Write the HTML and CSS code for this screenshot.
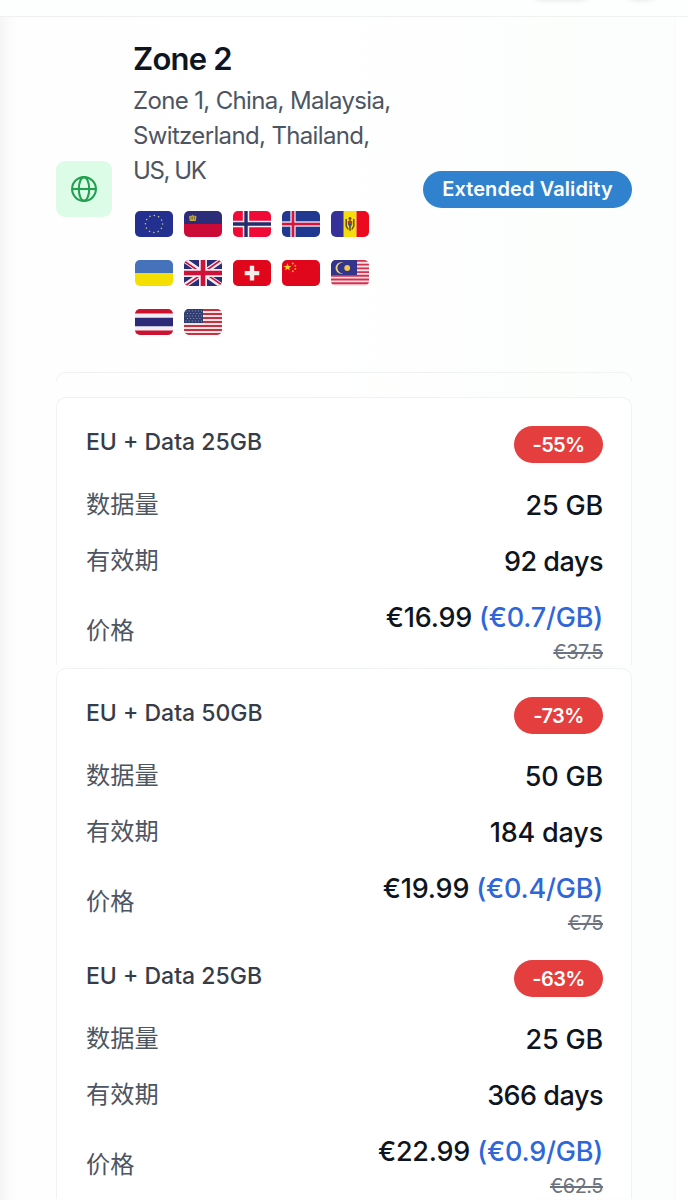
FILE: index.html
```html
<!DOCTYPE html>
<html lang="zh-CN">
<head>
  <meta charset="UTF-8">
  <meta name="viewport" content="width=device-width, initial-scale=1.0">
  <title>Zone 2</title>
  <link rel="stylesheet" href="styles.css">
</head>
<body>
  <header class="topbar">
    <span class="topbar-pill"></span>
    <span class="topbar-dot"></span>
  </header>

  <main class="panel">
    <section class="zone">
      <div class="zone-icon">
        <svg viewBox="0 0 26 26" width="26" height="26" fill="none" stroke="#22a050" stroke-width="2.1">
          <circle cx="13" cy="13" r="11.9"/>
          <ellipse cx="13" cy="13" rx="5.2" ry="11.9"/>
          <path d="M1 13h24"/>
        </svg>
      </div>
      <div class="zone-info">
        <h1 class="zone-title">Zone 2</h1>
        <p class="zone-desc">Zone 1, China, Malaysia,<br>Switzerland, Thailand,<br><span class="tight">US, UK</span></p>
        <div class="flags">
          <!-- EU -->
          <svg class="flag" viewBox="0 0 38 26">
            <path fill="#233090" d="M0 0h38v26H0z"/>
            <circle cx="19" cy="13" r="8.6" fill="none" stroke="#c9c77c" stroke-width="1.5" stroke-linecap="round" stroke-dasharray=".1 4.403"/>
          </svg>
          <!-- Liechtenstein -->
          <svg class="flag" viewBox="0 0 38 26">
            <path fill="#2b2d78" d="M0 0h38v13H0z"/>
            <path fill="#cc0a37" d="M0 13h38v13H0z"/>
            <path fill="#c9ab3c" d="M5 5.5l1.8-1 1.2.5.7-1.8.8 1.8 1.2-.5 1.8 1-.8 4.5H5.8z"/>
            <path stroke="#5a5030" stroke-width=".7" d="M7 5.5v3M8.700 5.500v3M10.500 5.500v3"/>
          </svg>
          <!-- Norway -->
          <svg class="flag" viewBox="0 0 38 26">
            <path fill="#f00a38" d="M0 0h38v26H0z"/>
            <path stroke="#f4eef4" stroke-width="6.400" d="M13 0v26M0 13h38"/>
            <path stroke="#252a68" stroke-width="3.400" d="M13 0v26M0 13h38"/>
          </svg>
          <!-- Iceland -->
          <svg class="flag" viewBox="0 0 38 26">
            <path fill="#20388f" d="M0 0h38v26H0z"/>
            <path stroke="#dfd9ea" stroke-width="5.400" d="M11 0v26M0 13h38"/>
            <path stroke="#dc1238" stroke-width="2.600" d="M11 0v26M0 13h38"/>
          </svg>
          <!-- Moldova -->
          <svg class="flag" viewBox="0 0 38 26">
            <path fill="#35309a" d="M0 0h13v26H0z"/>
            <path fill="#f6de0c" d="M12.500 0h13v26h-13z"/>
            <path fill="#ec0a20" d="M25.500 0H38v26H25.500z"/>
            <path fill="none" stroke="#6b4a1c" stroke-width="1.500" d="M15.200 8v7l2 3.500M22.800 8v7l-2 3.500M19 6v4M17.500 7.500h3M19 16v4"/>
            <path fill="#b23a22" d="M16.800 10h4.400v3h-4.400z"/>
            <path fill="#3b4f7c" d="M16.800 13h4.400L19 17z"/>
          </svg>
          <!-- Ukraine -->
          <svg class="flag" viewBox="0 0 38 26">
            <path fill="#4572ba" d="M0 0h38v13H0z"/>
            <path fill="#f4df00" d="M0 13h38v13H0z"/>
          </svg>
          <!-- United Kingdom -->
          <svg class="flag" viewBox="0 0 38 26">
            <path fill="#2b2d78" d="M0 0h38v26H0z"/>
            <path stroke="#f2edf3" stroke-width="5" d="M0 0l38 26M38 0L0 26"/>
            <path stroke="#d01238" stroke-width="1.600" d="M0 1l17 11.600M38 25L21 13.400M37 0L20 12M1 26l17-12"/>
            <path stroke="#f2edf3" stroke-width="8" d="M19 0v26M0 13h38"/>
            <path stroke="#d01238" stroke-width="4.600" d="M19 0v26M0 13h38"/>
          </svg>
          <!-- Switzerland -->
          <svg class="flag" viewBox="0 0 38 26">
            <path fill="#e0061c" d="M0 0h38v26H0z"/>
            <path stroke="#f3eeee" stroke-width="4.400" d="M19 5.800v14.600M11.700 13.100h14.600"/>
          </svg>
          <!-- China -->
          <svg class="flag" viewBox="0 0 38 26">
            <path fill="#e0061c" d="M0 0h38v26H0z"/>
            <path fill="#f5d327" d="M5.500 3l1 2.900h3L7.100 7.700l.9 2.900-2.500-1.800L3 10.600l.9-2.900-2.400-1.800h3z"/>
            <g fill="#eda72b">
              <circle cx="10.800" cy="3.600" r="1"/>
              <circle cx="13.300" cy="5.800" r="1"/>
              <circle cx="13.300" cy="9" r="1"/>
              <circle cx="10.800" cy="11.200" r="1"/>
            </g>
          </svg>
          <!-- Malaysia -->
          <svg class="flag" viewBox="0 0 38 26">
            <path fill="#f1e4e8" d="M0 0h38v26H0z"/>
            <path stroke="#d7304e" stroke-width="1.860" d="M0 .930h38M0 4.640h38M0 8.360h38M0 12.070h38M0 15.790h38M0 19.500h38M0 23.220h38"/>
            <path fill="#33348c" d="M0 0h26v15H0z"/>
            <path fill="#f0d27a" d="M13 3a5.700 5.700 0 1 0 0 10 5.200 5.200 0 1 1 0-10z"/>
            <circle cx="16.200" cy="8" r="2.900" fill="#f0c94a"/>
          </svg>
          <!-- Thailand -->
          <svg class="flag" viewBox="0 0 38 26">
            <path fill="#cd1230" d="M0 0h38v26H0z"/>
            <path fill="#f0eef4" d="M0 4.600h38v16.800H0z"/>
            <path fill="#2c2a78" d="M0 8.700h38v8.600H0z"/>
          </svg>
          <!-- United States -->
          <svg class="flag" viewBox="0 0 38 26">
            <path fill="#f1e4e6" d="M0 0h38v26H0z"/>
            <path stroke="#c8303f" stroke-width="2" d="M0 1h38M0 5h38M0 9h38M0 13h38M0 17h38M0 21h38M0 25h38"/>
            <path fill="#2f3c70" d="M0 0h19v14H0z"/>
            <path stroke="#a6adca" stroke-width="1" stroke-linecap="round" stroke-dasharray=".1 3" d="M2 2h16M3.500 4.500h14M2 7h16M3.500 9.500h14M2 12h16"/>
          </svg>
        </div>
      </div>
      <span class="badge badge-validity">Extended Validity</span>
    </section>

    <div class="card-stub"></div>

    <article class="card">
      <div class="card-head">
        <h2 class="card-title">EU + Data 25GB</h2>
        <span class="badge badge-sale">-55%</span>
      </div>
      <dl class="rows">
        <div class="row"><dt>数据量</dt><dd>25 GB</dd></div>
        <div class="row"><dt>有效期</dt><dd class="tight">92 days</dd></div>
        <div class="row row-price">
          <dt>价格</dt>
          <dd>€16.99 <span class="per-gb">(€0.7/GB)</span><s class="old-price">€37.5</s></dd>
        </div>
      </dl>
    </article>

    <article class="card card-joined">
      <div class="card-head">
        <h2 class="card-title">EU + Data 50GB</h2>
        <span class="badge badge-sale">-73%</span>
      </div>
      <dl class="rows">
        <div class="row"><dt>数据量</dt><dd>50 GB</dd></div>
        <div class="row"><dt>有效期</dt><dd>184 days</dd></div>
        <div class="row row-price">
          <dt>价格</dt>
          <dd>€19.99 <span class="per-gb">(€0.4/GB)</span><s class="old-price">€75</s></dd>
        </div>
      </dl>
    </article>

    <article class="card card-continued">
      <div class="card-head">
        <h2 class="card-title">EU + Data 25GB</h2>
        <span class="badge badge-sale">-63%</span>
      </div>
      <dl class="rows">
        <div class="row"><dt>数据量</dt><dd>25 GB</dd></div>
        <div class="row"><dt>有效期</dt><dd class="tight">366 days</dd></div>
        <div class="row row-price">
          <dt>价格</dt>
          <dd>€22.99 <span class="per-gb">(€0.9/GB)</span><s class="old-price">€62.5</s></dd>
        </div>
      </dl>
    </article>
  </main>
</body>
</html>
```
FILE: styles.css
```css
* {
  box-sizing: border-box;
}
html {
  overflow: hidden;
}
body {
  margin: 0;
  height: 1200px;
  overflow: hidden;
  background: #fff;
  color: #0f1520;
  font-family: Inter, "Noto Sans CJK SC", sans-serif;
}
h1, h2, p, dl, dd {
  margin: 0;
}

.topbar {
  display: flex;
  justify-content: flex-end;
  gap: 36px;
  height: 17px;
  padding-right: 32px;
  overflow: hidden;
  background: #fdfffe;
  border-bottom: 1px solid #f0f2f1;
}
.topbar-pill, .topbar-dot {
  height: 20px;
  margin-top: -22px;
  border-radius: 10px;
  box-shadow: 0 0 7px rgba(0, 0, 0, 0.22);
}
.topbar-pill {
  width: 58px;
}
.topbar-dot {
  width: 30px;
}

.panel {
  width: 676px;
  height: 1183px;
  padding: 21px 43px 0 56px;
  overflow: hidden;
  border-right: 1px solid #f8faf8;
  background: linear-gradient(90deg, #f5f5f5 0, #fbfbfb 8px, #fefefe 18px, #fefffe 50%, #fbfefc 100%);
}

.zone {
  display: flex;
  align-items: center;
  height: 302px;
}
.zone-icon {
  display: flex;
  align-items: center;
  justify-content: center;
  flex: none;
  width: 56px;
  height: 56px;
  border-radius: 9px;
  background: #dcfce7;
}
.zone-info {
  flex: none;
  width: 268px;
  height: 302px;
  margin: 0 22px 0 21px;
}
.zone-title {
  font-size: 31px;
  font-weight: 600;
  line-height: 42px;
  letter-spacing: -0.8px;
}
.zone-desc {
  margin-top: 3px;
  color: #4d5562;
  font-size: 24px;
  line-height: 35px;
  letter-spacing: -0.65px;
  white-space: nowrap;
}
.zone-desc .tight {
  letter-spacing: -1.4px;
}
.flags {
  display: flex;
  flex-wrap: wrap;
  gap: 23px 11px;
  padding: 23px 0 0 2px;
}
.flag {
  width: 38px;
  height: 26px;
  border-radius: 5px;
}

.badge {
  display: flex;
  align-items: center;
  justify-content: center;
  height: 37px;
  border-radius: 19px;
  color: #fff;
  font-weight: 600;
  white-space: nowrap;
}
.badge-validity {
  flex: none;
  width: 209px;
  background: #3182ce;
  font-size: 20px;
  letter-spacing: 0.1px;
}
.badge-sale {
  width: 89px;
  background: #e53e3e;
  font-size: 20px;
  letter-spacing: -0.6px;
}

.card-stub {
  height: 9px;
  margin: 32px 0 16px;
  border: 1px solid #f0f3f1;
  border-bottom: 0;
  border-radius: 9px 9px 0 0;
}

.card {
  margin-bottom: 3px;
  padding: 28px 28px 0 29px;
  border: 1px solid #f0f2f3;
  border-bottom: 0;
  border-radius: 10px 10px 0 0;
  background: #fff;
}
.card-joined {
  margin-bottom: 0;
  padding-bottom: 4px;
}
.card-continued {
  padding-top: 20px;
  border-top: 0;
  border-radius: 0;
}
.card-head {
  display: flex;
  justify-content: space-between;
  margin-bottom: 25px;
}
.card-title {
  color: #363d49;
  font-size: 23px;
  font-weight: 500;
  line-height: 33px;
}
.rows {
  display: grid;
  gap: 20px;
}
.row {
  display: flex;
  align-items: center;
  justify-content: space-between;
}
.row dt {
  color: #4d5562;
  font-size: 24.2px;
  line-height: 33px;
  margin-bottom: 3px;
}
.row dd {
  font-size: 27px;
  font-weight: 550;
  line-height: 36px;
  letter-spacing: -0.2px;
  text-align: right;
}
.row dd.tight {
  letter-spacing: -0.5px;
}
.row-price dt {
  margin-bottom: 5px;
}
.per-gb {
  color: #2f66d8;
}
.old-price {
  display: block;
  margin-top: 3px;
  color: #6b7280;
  font-size: 20px;
  font-weight: 400;
  line-height: 26px;
  letter-spacing: -0.5px;
}
```
